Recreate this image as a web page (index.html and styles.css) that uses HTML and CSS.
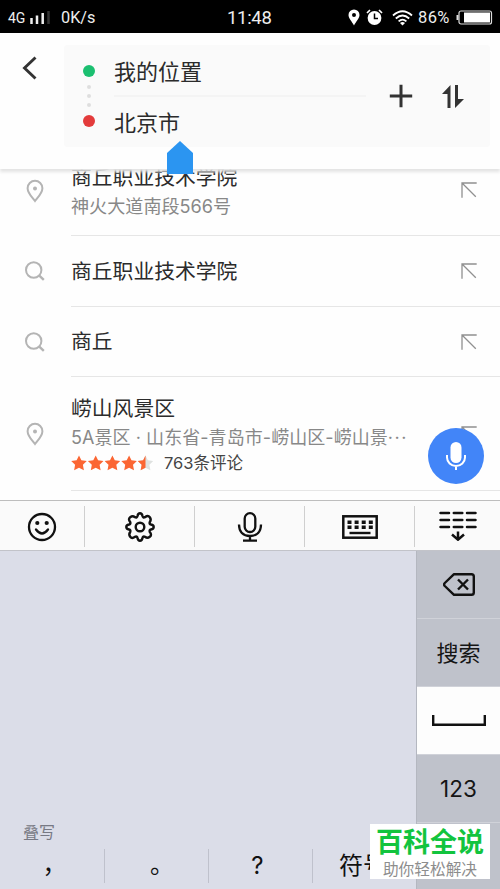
FILE: index.html
```html
<!DOCTYPE html>
<html lang="zh-CN">
<head>
<meta charset="utf-8">
<title>路线搜索</title>
<link rel="stylesheet" href="styles.css">
</head>
<body>
<svg class="defs" width="0" height="0">
  <symbol id="pin" viewBox="0 0 20 24"><path d="M10 1.800a7.400 7.400 0 0 1 7.400 7.400C17.400 14 13.500 17.500 10 22 6.500 17.500 2.600 14 2.600 9.200A7.400 7.400 0 0 1 10 1.800z" fill="none" stroke="#b4b4b4" stroke-width="2"/><circle cx="10" cy="9.500" r="2" fill="#b4b4b4"/></symbol>
  <symbol id="search" viewBox="0 0 20 20"><circle cx="8.700" cy="9" r="7.700" fill="none" stroke="#b4b4b4" stroke-width="2"/><path d="M14 14.300l4.800 4.500" stroke="#b4b4b4" stroke-width="2.400"/></symbol>
  <symbol id="fill" viewBox="0 0 16 16"><path d="M15.700 1H1v14.700M1 1l13.800 13.800" fill="none" stroke="#909090" stroke-width="1.300"/></symbol>
  <symbol id="star" viewBox="0 0 16 16"><path d="M8 .4l2.400 4.800 5.400.8-3.900 3.800 1 5.500L8 12.800l-4.900 2.500 1-5.500L.2 6l5.400-.8z"/></symbol>
</svg>
<div class="phone">
  <div class="status">
    <span class="net">4G</span>
    <svg class="signal" width="20" height="14" viewBox="0 0 20 14"><path d="M1.500 7v6M7 4.500V13M12.700 2v11" stroke="#eee" stroke-width="2.500"/><path d="M18.500 0v13" stroke="#333" stroke-width="2.500"/></svg>
    <span class="speed">0K/s</span>
    <span class="clock">11:48</span>
    <div class="status-right">
      <svg width="12" height="17" viewBox="0 0 12 17"><path fill="#fff" fill-rule="evenodd" d="M6 .5a5.500 5.500 0 0 1 5.500 5.500C11.500 9.500 8 12.500 6 16.500 4 12.500.5 9.500.5 6A5.500 5.500 0 0 1 6 .5zM6 4a2 2 0 1 0 0 4 2 2 0 0 0 0-4z"/></svg>
      <svg class="alarm" width="17" height="17" viewBox="0 0 17 17"><circle cx="8.500" cy="9" r="6.900" fill="#fff"/><path d="M1 4l3-3M16 4l-3-3" stroke="#fff" stroke-width="1.700"/><path d="M8.500 4.500v5H12" fill="none" stroke="#000" stroke-width="1.500"/></svg>
      <svg class="wifi" width="21" height="16" viewBox="0 0 21 16"><g fill="none" stroke="#fff" stroke-width="1.800"><path d="M1 5.500q9.500-8.500 19 0M3.800 8.500q6.700-6 13.400 0M6.600 11.400q3.900-3.600 7.800 0"/></g><path d="M8 13q2.500-1.800 5 0l-2.500 2.600z" fill="#fff"/></svg>
      <span class="percent">86%</span>
      <svg width="37" height="15" viewBox="0 0 37 15"><rect x="3" y="1" width="32.500" height="13" rx="2" fill="none" stroke="#ddd" stroke-width="1.200"/><path d="M1.500 5v5" stroke="#ddd" stroke-width="2"/><rect x="8" y="2.500" width="26" height="10" fill="#fff"/></svg>
    </div>
  </div>

  <header class="header">
    <svg class="back" width="16" height="24" viewBox="0 0 16 24"><path d="M13.500 1.500L2.500 12l11 10.500" fill="none" stroke="#333" stroke-width="2.900"/></svg>
    <div class="route">
      <div class="marks"><i class="dot start"></i><i class="tiny"></i><i class="tiny"></i><i class="tiny"></i><i class="dot end"></i></div>
      <div class="fields">
        <div class="field">我的位置</div>
        <div class="rule"></div>
        <div class="field">北京市</div>
      </div>
      <svg class="plus" width="24" height="24" viewBox="0 0 24 24"><path d="M12 .8v22.400M.8 12h22.400" stroke="#333" stroke-width="3"/></svg>
      <svg class="swap" width="22" height="23" viewBox="0 0 22 23"><path d="M8.500 0v23H5.500V8.900H0zM13 0h3v14H22L13 23z" fill="#333"/></svg>
    </div>
    <svg class="handle" width="26" height="33" viewBox="0 0 26 33"><path d="M13 0l13 12v21H0V12z" fill="#2b95f1"/></svg>
  </header>

  <main class="list">
    <div class="item first">
      <svg class="lead" width="20" height="24"><use href="#pin"/></svg>
      <div class="body"><div class="text"><div class="title">商丘职业技术学院</div><div class="sub">神火大道南段566号</div></div><svg class="go" width="16" height="16"><use href="#fill"/></svg></div>
    </div>
    <div class="item">
      <svg class="lead" width="20" height="20"><use href="#search"/></svg>
      <div class="body"><div class="text"><div class="title">商丘职业技术学院</div></div><svg class="go" width="16" height="16"><use href="#fill"/></svg></div>
    </div>
    <div class="item short">
      <svg class="lead" width="20" height="20"><use href="#search"/></svg>
      <div class="body"><div class="text"><div class="title">商丘</div></div><svg class="go" width="16" height="16"><use href="#fill"/></svg></div>
    </div>
    <div class="item tall">
      <svg class="lead" width="20" height="24"><use href="#pin"/></svg>
      <div class="body"><div class="text"><div class="title">崂山风景区</div><div class="sub">5A景区 · 山东省-青岛市-崂山区-崂山景<span class="more">···</span></div>
        <div class="rating">
          <svg width="82" height="16" viewBox="0 0 82 16"><defs><clipPath id="half"><path d="M66 0h8.500v16H66z"/></clipPath></defs><g fill="#fb6633"><use href="#star" width="16" height="16"/><use href="#star" x="16.700" width="16" height="16"/><use href="#star" x="33.400" width="16" height="16"/><use href="#star" x="50.100" width="16" height="16"/></g><use href="#star" x="66.500" width="16" height="16" fill="#dfe2e0"/><g clip-path="url(#half)"><use href="#star" x="66.500" width="16" height="16" fill="#fb6633"/></g></svg>
          <span>763条评论</span>
        </div></div><svg class="go" width="16" height="16"><use href="#fill"/></svg></div>
    </div>
    <div class="voice"><svg width="20" height="28" viewBox="0 0 20 28"><rect x="4.500" y="0" width="11" height="21" rx="5.500" fill="#fff"/><path d="M1 13v2.500a9 8.500 0 0 0 18 0V13M10 24v4" fill="none" stroke="#fff" stroke-width="2"/></svg></div>
  </main>

  <div class="tools">
    <div class="tool"><svg width="30" height="30" viewBox="0 0 30 30"><g fill="none" stroke="#111" stroke-width="2.300"><circle cx="15" cy="15" r="13"/><path d="M9 17.500q6 8 12 0" stroke-linecap="round"/></g><circle cx="10.300" cy="11" r="2.100" fill="#111"/><circle cx="19.700" cy="11" r="2.100" fill="#111"/></svg></div>
    <div class="tool"><svg width="30" height="30" viewBox="0 0 30 30"><g fill="none" stroke="#111" stroke-width="2.400" stroke-linejoin="round"><circle cx="15" cy="15" r="4.300"/><path d="M12.500 4Q13 1.300 15 1.300T17.500 4Q18 6 20 5.200Q23 2.800 24.800 5.200T24.800 10Q24 12 26 12.500Q28.700 13 28.700 15T26 17.500Q24 18 24.800 20Q27.200 23 24.800 24.800T20 24.800Q18 24 17.500 26Q17 28.700 15 28.700T12.500 26Q12 24 10 24.800Q7 27.200 5.200 24.800T5.200 20Q6 18 4 17.500Q1.300 17 1.300 15T4 12.500Q6 12 5.200 10Q2.800 7 5.200 5.200T10 5.200Q12 6 12.500 4z"/></g></svg></div>
    <div class="tool"><svg width="26" height="30" viewBox="0 0 26 30"><g fill="none" stroke="#111" stroke-width="2.300"><rect x="7.700" y="1.200" width="10.600" height="18.800" rx="5.300"/><path d="M2 12.500c0 7 4 11.500 11 11.500s11-4.500 11-11.500M13 24v4.500M6 28.600h14"/></g></svg></div>
    <div class="tool"><svg width="36" height="24" viewBox="0 0 36 24"><rect x="1.300" y="1.300" width="33.400" height="21.400" fill="none" stroke="#111" stroke-width="2.500"/><path d="M5.500 7.200H31M5.500 12.200H31" stroke="#111" stroke-width="3.600" stroke-dasharray="4 3.100"/><path d="M7.500 18h21" stroke="#111" stroke-width="2.400"/></svg></div>
    <div class="tool"><svg class="hide" width="38" height="30" viewBox="0 0 38 30"><path d="M1.500 2H10M14.800 2h8.500M28 2h8.500M1.500 9H10M14.800 9h8.500M28 9h8.500M1.500 16H10M14.800 16h8.500M28 16h8.500" stroke="#111" stroke-width="2.500" stroke-linecap="round"/><path d="M19 20.500v8M13 23.500l6 5.200 6-5.200" fill="none" stroke="#111" stroke-width="2.500"/></svg></div>
  </div>

  <div class="keyboard">
    <div class="pad">
      <div class="stack">叠写</div>
      <div class="puncts">
        <div class="punct comma">，</div><div class="punct stop">。</div><div class="punct question">?</div><div class="punct symbol">符号</div>
      </div>
    </div>
    <div class="side">
      <div class="key"><svg width="32" height="23" viewBox="0 0 32 23"><path d="M11 1.200h17.500q2.300 0 2.300 2.300v16q0 2.300-2.300 2.300H11L1.800 13q-1.500-1.500 0-3zM15 6.500l10 10M25 6.500l-10 10" fill="none" stroke="#111" stroke-width="2.400" stroke-linejoin="round"/></svg></div>
      <div class="key">搜索</div>
      <div class="key white"><svg width="54" height="12" viewBox="0 0 54 12"><path d="M1.200 0v9.800h51.600V0" fill="none" stroke="#111" stroke-width="2.400"/></svg></div>
      <div class="key num">123</div>
      <div class="key"></div>
    </div>
    <div class="mark"><div class="brand">百科全说</div><div class="slogan">助你轻松解决</div></div>
  </div>
</div>
</body>
</html>
```
FILE: styles.css
```css
* { box-sizing: border-box; }
body { margin: 0; font-family: Inter, "Noto Sans CJK SC", sans-serif; color: #2b2b2b; }
svg { display: block; flex: none; }
.defs { position: absolute; }
.phone { width: 500px; height: 889px; overflow: hidden; display: flex; flex-direction: column; background: #fefefe; }

.status { height: 33px; flex: none; position: relative; z-index: 3; background: #000; color: #eee; display: flex; align-items: center; padding: 2px 8px 0; font-family: Roboto, sans-serif; }
.net { width: 22px; font-size: 14px; }
.signal { margin-right: 11px; }
.speed { width: 167px; font-size: 16.300px; }
.clock { width: 60px; font-size: 18.500px; margin-left: -1px; letter-spacing: -.3px; }
.status-right { display: flex; align-items: center; margin-left: auto; margin-right: -1px; }
.alarm { margin-left: 6px; }
.wifi { margin: 0 5px 0 9px; }
.percent { width: 35px; margin-right: 3px; font-size: 16.500px; letter-spacing: .4px; }

.header { height: 136px; flex: none; position: relative; z-index: 2; background: #fefefe; display: flex; align-items: flex-start; padding: 12px 10px 0 22px; box-shadow: 0 3px 3px #e4e4e4; }
.back { margin: 11px 26px 0 0; }
.route { width: 426px; height: 102px; background: #fafafa; display: flex; align-items: center; padding: 0 26px 0 19px; border-radius: 3px; }
.marks { width: 12px; display: flex; flex-direction: column; align-items: center; gap: 5px; }
.dot { width: 12px; height: 12px; border-radius: 50%; }
.start { background: #1bbf70; margin-bottom: 3px; }
.end { background: #e33b3b; margin-top: 3px; }
.tiny { width: 4px; height: 4px; border-radius: 50%; background: #dedede; }
.fields { width: 252px; margin-left: 19px; }
.field { font-size: 22px; height: 49px; line-height: 53px; }
.rule { height: 2px; background: #f4f4f4; }
.plus { margin-left: 23px; }
.swap { margin-left: 29px; }
.handle { position: absolute; left: 167px; top: 108px; }

.list { height: 331px; flex: none; overflow: hidden; position: relative; }
.item { height: 71px; display: flex; align-items: center; padding-left: 25px; }
.item.first { height: 67px; }
.item.short { height: 70px; }
.item.tall { height: 114px; }
.lead { width: 20px; margin: -1px 26px 0 0; }
.first .lead { margin-top: -24px; }
.body { flex: 1; height: 100%; display: flex; align-items: center; border-bottom: 1px solid #e6e6e6; }
.text { flex: 1; white-space: nowrap; }
.title { font-size: 20.800px; line-height: 28px; padding-top: 1px; }
.sub { font-size: 18.100px; line-height: 28px; color: #888; }
.first .text { margin-top: -21px; }
.first .go { margin-top: -24px; }
.tall .title { padding-top: 0; }
.tall .sub { font-size: 18px; line-height: 30px; letter-spacing: .06px; }
.go { margin-right: 23px; }
.more { letter-spacing: 1.500px; }
.rating { display: flex; align-items: center; gap: 11px; font-size: 16.500px; height: 20px; line-height: 20px; color: #444; }
.voice { position: absolute; left: 428px; top: 259px; width: 56px; height: 56px; border-radius: 50%; background: #4285f8; display: flex; align-items: center; justify-content: center; }

.tools { height: 51px; flex: none; display: grid; grid-template-columns: 85px 110px 110px 110px 85px; background: #fafafa; border-top: 1px solid #bdbdbd; border-bottom: 1px solid #c2c3c9; padding: 5px 0 3px; }
.tool { display: flex; align-items: center; justify-content: center; border-right: 1px solid #cfcfcf; }
.tool:last-child { border: 0; }
.hide { margin-top: -2px; }

.keyboard { flex: 1; display: flex; position: relative; background: #dbdde8; }
.pad { width: 416px; display: flex; flex-direction: column; justify-content: flex-end; }
.stack { font-size: 16px; line-height: 20px; color: #777984; padding-left: 23px; margin-bottom: 7px; }
.puncts { height: 34px; margin-bottom: 8px; display: grid; grid-template-columns: 105px 104px 104px 103px; }
.punct { font-size: 24px; line-height: 34px; text-align: center; border-right: 1px solid #bfc1cc; color: #111; white-space: nowrap; }
.punct:last-child { border: 0; }
.comma { text-indent: 5px; line-height: 32px; }
.stop { text-indent: 11px; line-height: 32px; }
.question { padding-right: 6px; }
.symbol { padding-right: 3px; }
.side { width: 84px; border-left: 1px solid #b4b7c0; }
.key { height: 68px; background: #bfc2cb; border-bottom: 1px solid #d0d2d9; display: flex; align-items: center; justify-content: center; font-size: 22px; line-height: 30px; color: #151515; }
.key.white { background: #fdfdfd; }
.num { font-size: 22.500px; }
.mark { position: absolute; left: 370px; top: 273px; width: 120px; height: 55px; background: #fff; text-align: center; white-space: nowrap; }
.brand { font-size: 27px; font-weight: 700; line-height: 37px; color: #12c43e; }
.slogan { font-size: 15.700px; line-height: 17px; color: #8d8d8d; }
```
